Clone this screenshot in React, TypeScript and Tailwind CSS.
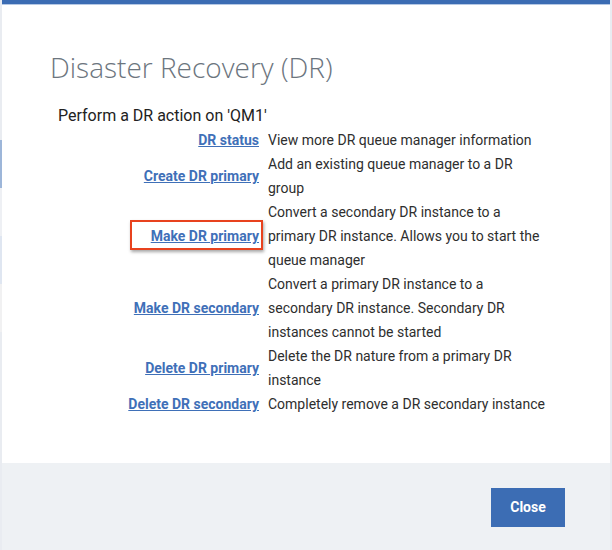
import React from "react";

const rows: { label: string; desc: string; highlight?: boolean }[] = [
  { label: "DR status", desc: "View more DR queue manager information" },
  { label: "Create DR primary", desc: "Add an existing queue manager to a DR group" },
  { label: "Make DR primary", desc: "Convert a secondary DR instance to a primary DR instance. Allows you to start the queue manager", highlight: true },
  { label: "Make DR secondary", desc: "Convert a primary DR instance to a secondary DR instance. Secondary DR instances cannot be started" },
  { label: "Delete DR primary", desc: "Delete the DR nature from a primary DR instance" },
  { label: "Delete DR secondary", desc: "Completely remove a DR secondary instance" },
];

export default function App() {
  return (
    <div className="flex h-[550px] w-[612px] bg-[#eceff3]" style={{ fontFamily: 'Roboto, "Noto Sans", sans-serif' }}>
      <div className="flex w-[2px] flex-col">
        <div className="h-[140px] bg-[#e9ecf1]" />
        <div className="h-[48px] bg-[#9db6d9]" />
        <div className="h-[48px] bg-[#eef0f4]" />
        <div className="h-[48px] bg-[#dfe6f1]" />
        <div className="h-[48px] bg-[#f1f1f2]" />
        <div className="flex-1 bg-[#e9ecf1]" />
      </div>
      <div className="flex w-[608px] flex-col">
        <div className="h-[4px] bg-[#3b6cb3]" />
        <div className="h-[1px] bg-[#b5c8e4]" />
        <div className="flex flex-1 flex-col bg-white">
          <h1 className="pl-[48px] pt-[44px] font-['Open_Sans'] text-[28px] font-light leading-[36px] text-[#6c757e]">Disaster Recovery (DR)</h1>
          <p className="pl-[56px] pt-[22px] text-[16px] leading-[18px] text-[#222]">Perform a DR action on 'QM1'</p>
          <div className="mt-[3px] grid grid-cols-[257px_280px] gap-x-[9px] text-[14px] leading-[24px]">
            {rows.map((r) => (
              <React.Fragment key={r.label}>
                <div className="flex items-center justify-end">
                  {r.highlight ? (
                    <span className="relative top-[-1px] mr-[-4px] border-2 border-[#e8421e] py-[1px] pl-[19px] pr-[2px] shadow-[1px_2px_3px_rgba(0,0,0,0.35)]">
                      <a className="relative top-[1px] font-bold text-[#3f70b8] underline">{r.label}</a>
                    </span>
                  ) : (
                    <a className="font-bold text-[#3f70b8] underline">{r.label}</a>
                  )}
                </div>
                <div className="text-[#2e2e2e]">{r.desc}</div>
              </React.Fragment>
            ))}
          </div>
        </div>
        <div className="flex h-[87px] items-start justify-end bg-[#eef1f4] pr-[45px] pt-[25px]">
          <button className="h-[39px] w-[74px] bg-[#3c6db4] text-[14px] font-bold text-white">Close</button>
        </div>
      </div>
      <div className="w-[2px] bg-[#e9ecf1]" />
    </div>
  );
}
